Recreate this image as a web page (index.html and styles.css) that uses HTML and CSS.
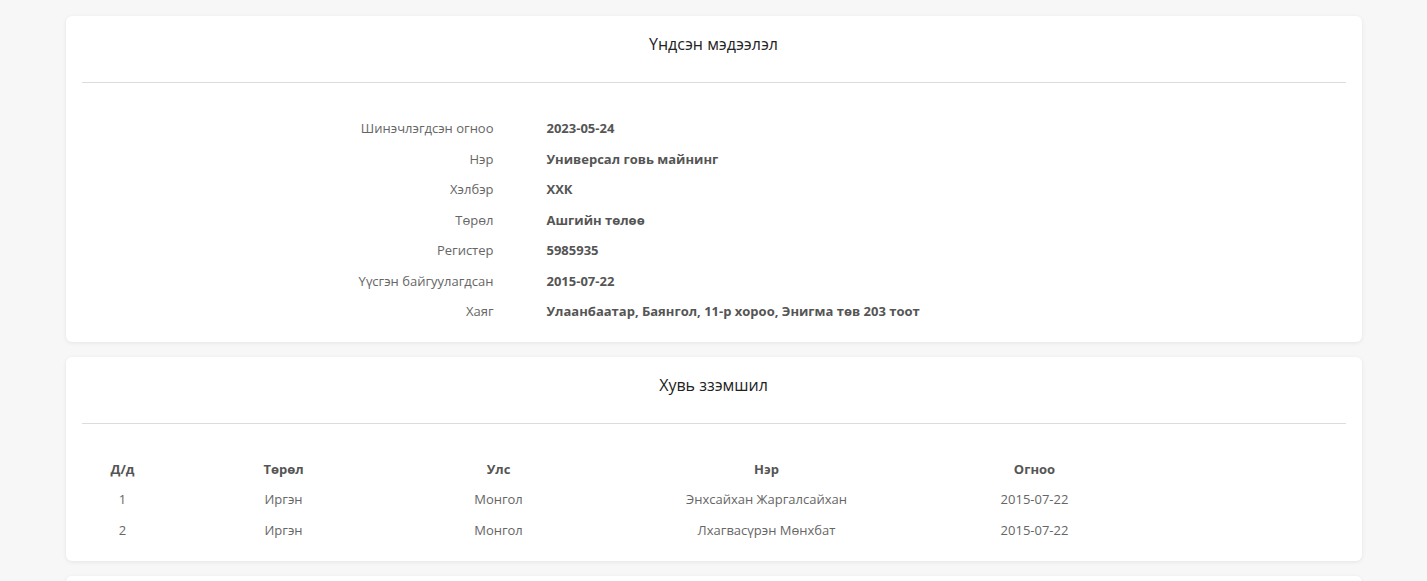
FILE: index.html
```html
<!DOCTYPE html>
<html lang="mn">
<head>
    <meta charset="UTF-8">
    <meta name="viewport" content="width=device-width, initial-scale=1.0">
    <title>Үндсэн мэдээлэл</title>
    <link rel="stylesheet" href="styles.css">
</head>
<body>
    <div class="container">
        <!-- Үндсэн мэдээлэл -->
        <div class="card">
            <div class="card-head">
                <h3>Үндсэн мэдээлэл</h3>
            </div>
            <div class="card-body">
                <dl class="info">
                    <dt>Шинэчлэгдсэн огноо</dt><dd>2023-05-24</dd>
                    <dt>Нэр</dt><dd>Универсал говь майнинг</dd>
                    <dt>Хэлбэр</dt><dd>ХХК</dd>
                    <dt>Төрөл</dt><dd>Ашгийн төлөө</dd>
                    <dt>Регистер</dt><dd>5985935</dd>
                    <dt>Үүсгэн байгуулагдсан</dt><dd>2015-07-22</dd>
                    <dt>Хаяг</dt><dd>Улаанбаатар, Баянгол, 11-р хороо, Энигма төв 203 тоот</dd>
                </dl>
            </div>
        </div>

        <!-- Хувь эзэмшил -->
        <div class="card">
            <div class="card-head">
                <h3>Хувь ззэмшил</h3>
            </div>
            <div class="card-body table-body">
                <table class="owners">
                    <colgroup>
                        <col class="c-no">
                        <col class="c-type">
                        <col class="c-country">
                        <col class="c-name">
                        <col class="c-date">
                        <col>
                    </colgroup>
                    <thead>
                        <tr>
                            <th>Д/д</th>
                            <th>Төрөл</th>
                            <th>Улс</th>
                            <th>Нэр</th>
                            <th>Огноо</th>
                            <th></th>
                        </tr>
                    </thead>
                    <tbody>
                        <tr>
                            <td>1</td>
                            <td>Иргэн</td>
                            <td>Монгол</td>
                            <td>Энхсайхан Жаргалсайхан</td>
                            <td>2015-07-22</td>
                            <td></td>
                        </tr>
                        <tr>
                            <td>2</td>
                            <td>Иргэн</td>
                            <td>Монгол</td>
                            <td>Лхагвасүрэн Мөнхбат</td>
                            <td>2015-07-22</td>
                            <td></td>
                        </tr>
                    </tbody>
                </table>
            </div>
        </div>

        <!-- дараагийн хэсэг -->
        <div class="card card-empty"></div>
    </div>
</body>
</html>
```

FILE: styles.css
```css
*{
    margin: 0;
    padding: 0;
    box-sizing: border-box;
}
html{
    overflow: hidden;
}
body{
    background-color: #f7f7f7;
    font-family: "Open Sans", "Noto Sans", sans-serif;
    font-size: 13px;
    color: #555;
}
.container{
    width: 1296px;
    margin: 0 auto;
    padding-top: 16px;
}
.card{
    background-color: #fff;
    border-radius: 6px;
    box-shadow: 0 1px 4px rgba(0, 0, 0, 0.08);
    margin-bottom: 15px;
}
.card-empty{
    height: 120px;
}
.card-head{
    margin: 0 16px;
    padding: 16px 0 26px;
    border-bottom: 1px solid #dcdcdc;
    text-align: center;
}
.card-head h3{
    font-size: 16px;
    line-height: 24px;
    font-weight: 500;
    color: #222;
}
.card-body{
    padding: 30px 16px 15px;
}
.table-body{
    padding-bottom: 16px;
}
.info{
    display: grid;
    grid-template-columns: 412px 1fr;
    column-gap: 53px;
}
.info dt,
.info dd{
    line-height: 30.5px;
}
.info dt{
    text-align: right;
    color: #666;
}
.info dd{
    font-weight: 700;
    color: #555;
}
.owners{
    width: 100%;
    border-collapse: collapse;
    table-layout: fixed;
}
.c-no{ width: 82px; }
.c-type{ width: 240px; }
.c-country{ width: 190px; }
.c-name{ width: 346px; }
.c-date{ width: 190px; }
.owners th,
.owners td{
    height: 30.5px;
    text-align: center;
    font-weight: 400;
    color: #666;
}
.owners th{
    font-weight: 700;
    color: #555;
}
```
